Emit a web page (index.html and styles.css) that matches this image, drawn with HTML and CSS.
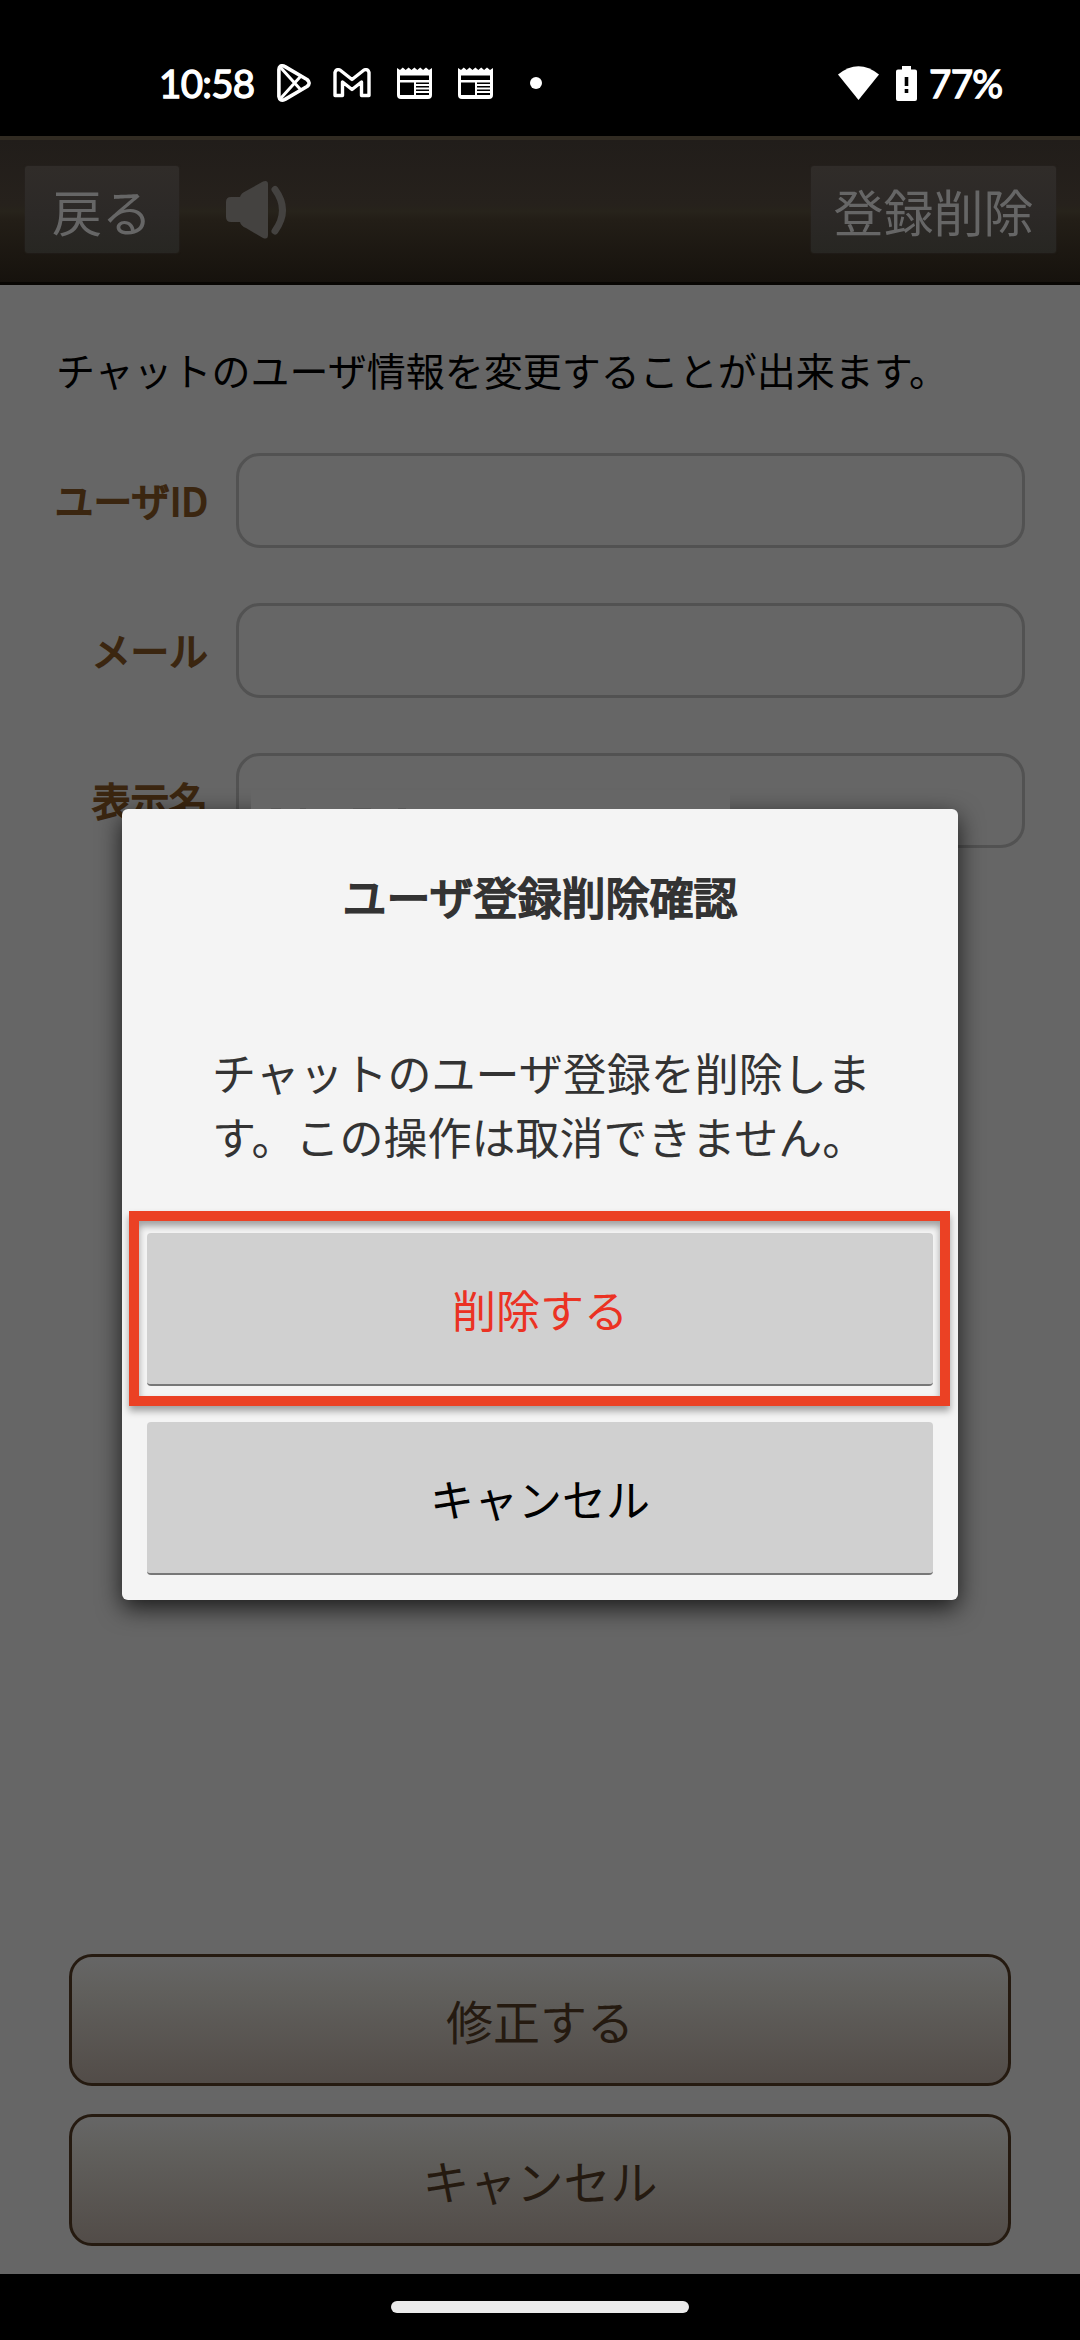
FILE: index.html
```
<!DOCTYPE html>
<html lang="ja">
<head>
<meta charset="utf-8">
<title>ユーザ登録</title>
<link rel="stylesheet" href="styles.css">
</head>
<body>
<div class="screen">
  <div class="status-bar">
    <div class="status-left">
      <span class="clock">10:58</span>
      <svg class="icon-play" width="34" height="38" viewBox="0 0 34 38" fill="none" stroke="#fff" stroke-width="3.6" stroke-linejoin="round" stroke-linecap="round"><path d="M1.9 5.5Q2.2 1 6.5 1.9L8 2.6L30 15.5Q34.300 19 30 22.500L8 35.400Q2.700 37.700 1.900 32.500Z"/><path d="M4 4L23.500 25.500M4 34L23.500 12.500" stroke-width="3"/></svg>
      <svg class="icon-mail" width="38" height="30" viewBox="0 0 38 30" fill="none" stroke="#fff" stroke-width="3.4" stroke-linejoin="round"><path d="M2 27.500V4.500Q3 .500 7 2L19 11.500L31 2Q35 .500 36 4.500V27.500H28.500V14L19 21.500L9.500 14V27.500Z"/></svg>
      <svg class="icon-news" width="35" height="32" viewBox="0 0 35 32"><path fill="#fff" d="M0 1L3 3L5.800 .500L8.700 3L11.600 .500L14.500 3L17.400 .500L20.300 3L23.200 .500L26.100 3L29 .500L32 3L35 1V28Q35 32 31 32H4Q0 32 0 28Z"/><path d="M3 8.500H32V13H3ZM3 15.500H17V28H3ZM19 15.500H32V17H19ZM19 19H32V20.500H19ZM19 22.500H32V24H19ZM19 26H32V28H19Z"/></svg>
      <svg class="icon-news" width="35" height="32" viewBox="0 0 35 32"><path fill="#fff" d="M0 1L3 3L5.800 .500L8.700 3L11.600 .500L14.500 3L17.400 .500L20.300 3L23.200 .500L26.100 3L29 .500L32 3L35 1V28Q35 32 31 32H4Q0 32 0 28Z"/><path d="M3 8.500H32V13H3ZM3 15.500H17V28H3ZM19 15.500H32V17H19ZM19 19H32V20.500H19ZM19 22.500H32V24H19ZM19 26H32V28H19Z"/></svg>
      <span class="more-dot"></span>
    </div>
    <div class="status-right">
      <svg width="41" height="34" viewBox="0 0 41 34"><path fill="#fff" d="M0 8.500Q20.500 -8 41 8.500L20.500 34Z"/></svg>
      <svg class="icon-battery" width="21" height="35" viewBox="0 0 21 35"><path fill="#fff" d="M6 0H15V3.500H19Q21 3.500 21 5.500V33Q21 35 19 35H2Q0 35 0 33V5.500Q0 3.500 2 3.500H6Z"/><path d="M8.700 11H12.300V20H8.700ZM8.700 23H12.300V27H8.700Z"/></svg>
      <span class="percent">77%</span>
    </div>
  </div>

  <header class="app-header">
    <button class="header-button back">戻る</button>
    <svg class="speaker" width="62" height="60" viewBox="0 0 62 60"><path fill="#444240" d="M5 17H14Q15 13 20 11L37 1.500Q42 0 42 4V55Q42 60 37 58L20 48Q15 46 14 42H5Q0 42 0 37V22Q0 17 5 17Z"/><path d="M49 9.500Q64 30 49 51" fill="none" stroke="#444240" stroke-width="7" stroke-linecap="round"/></svg>
    <button class="header-button remove">登録削除</button>
  </header>

  <main class="content">
    <p class="lead">チャットのユーザ情報を変更することが出来ます。</p>
    <div class="form">
      <div class="field"><span class="label">ユーザID</span><div class="input"></div></div>
      <div class="field"><span class="label">メール</span><div class="input"></div></div>
      <div class="field"><span class="label">表示名</span><div class="input"></div></div>
    </div>
    <div class="actions">
      <button class="action">修正する</button>
      <button class="action">キャンセル</button>
    </div>
  </main>

  <nav class="nav-bar"><span class="nav-pill"></span></nav>

  <div class="dialog">
    <h1 class="dialog-title">ユーザ登録削除確認</h1>
    <p class="dialog-message">チャットのユーザ登録を削除します。この操作は取消できません。</p>
    <button class="dialog-button danger">削除する</button>
    <button class="dialog-button">キャンセル</button>
    <div class="highlight"></div>
  </div>
  <div class="input-patch"></div>
</div>
</body>
</html>
```
FILE: styles.css
```
* { box-sizing: border-box; }
body { margin: 0; background: #000; font-family: "Noto Sans CJK JP", sans-serif; }
button { font: inherit; margin: 0; padding: 0; border: 0; }
svg { display: block; flex: none; }
.screen { position: relative; width: 1080px; height: 2340px; overflow: hidden; display: flex; flex-direction: column; background: #666; }

.status-bar { height: 136px; padding: 30px 78px 0 159px; background: #000; color: #fff; display: flex; justify-content: space-between; align-items: center; }
.status-left, .status-right { display: flex; align-items: center; }
.clock, .percent { font: 400 38.5px/40px Lato, sans-serif; letter-spacing: -0.7px; -webkit-text-stroke: 1.3px #fff; }
.clock { width: 118px; }
.icon-mail { margin-left: 22px; }
.icon-news { margin-left: 26px; }
.more-dot { width: 12px; height: 12px; border-radius: 50%; background: #fff; margin-left: 37px; }
.icon-battery { margin-left: 17px; }
.percent { width: 73px; margin-left: 12px; }

.app-header { height: 149px; padding: 26px 24px 0 25px; display: flex; align-items: center; border-top: 4px solid #312b22; border-bottom: 3px solid #080603; background: linear-gradient(#211d1a, #26211c 45%, #27231b 50%, #231e17 56%, #16120d); }
.header-button { height: 87px; margin-bottom: 29px; padding-top: 2px; line-height: 85px; font-size: 50px; color: #666; background: linear-gradient(#302c29, #2c2927 55%, #272622); border-radius: 3px; box-shadow: 0 0 2px #2c2926; }
.back { width: 154px; }
.remove { width: 245px; margin-left: auto; }
.speaker { margin: 0 0 29px 47px; }

.content { flex: 1; display: flex; flex-direction: column; padding: 56px 55px 28px 56px; }
.lead { margin: 0; height: 56px; line-height: 56px; font-size: 39px; color: #000; white-space: nowrap; }
.form { margin-top: 56px; display: flex; flex-direction: column; gap: 55px; }
.field { display: flex; align-items: center; gap: 28px; height: 95px; }
.label { width: 152px; padding-bottom: 3px; display: flex; justify-content: flex-end; font-size: 38.7px; -webkit-text-stroke: 1.8px #3b2610; color: #3b2610; white-space: nowrap; }
.input { flex: 1; height: 95px; border: 3px solid #525252; border-radius: 24px; }
.actions { margin: auto 14px 0 13px; display: flex; flex-direction: column; gap: 28px; }
.action { height: 132px; padding-bottom: 2px; border: 3px solid #251a10; border-radius: 23px; background: linear-gradient(#666, #61605d 25%, #524c48); color: #251a10; font-size: 47px; }

.nav-bar { height: 66px; background: #000; display: flex; justify-content: center; padding-top: 27px; }
.nav-pill { width: 298px; height: 12px; border-radius: 6px; background: #ebebeb; }

.dialog { position: absolute; left: 122px; top: 809px; width: 836px; height: 791px; padding: 55px 25px 25px; border-radius: 6px; background: #f4f4f4; box-shadow: 0 8px 24px rgba(0,0,0,.75); display: flex; flex-direction: column; }
.dialog-title { margin: 0 0 112px; flex: none; height: 64px; line-height: 64px; font-size: 44px; font-weight: 400; -webkit-text-stroke: 1.9px #333; text-align: center; color: #333; }
.dialog-message { margin: 0 61px 65px 65px; flex: none; height: 128px; line-height: 64px; font-size: 44px; color: #333; }
.dialog-button { flex: none; height: 153px; margin-bottom: 36px; border-radius: 4px; background: #d0d0d0; border-bottom: 2px solid #777; font-size: 44px; color: #000; }
.danger { color: #eb3223; }
.highlight { position: absolute; left: 7px; top: 402px; width: 821px; height: 195px; border: 10px solid #eb4124; box-shadow: 0 5px 7px rgba(0,0,0,.35), inset 0 5px 7px rgba(0,0,0,.35); }
.input-patch { position: absolute; left: 251px; top: 790px; width: 479px; height: 19px; background: linear-gradient(90deg, transparent 20px, #5a5a5a 20px 30px, transparent 30px 49px, #5a5a5a 49px 55px, transparent 55px 102px, #5a5a5a 102px 120px, transparent 120px 147px, #5a5a5a 147px 155px, transparent 155px) 0 100% / 100% 1px no-repeat #666; }
```
